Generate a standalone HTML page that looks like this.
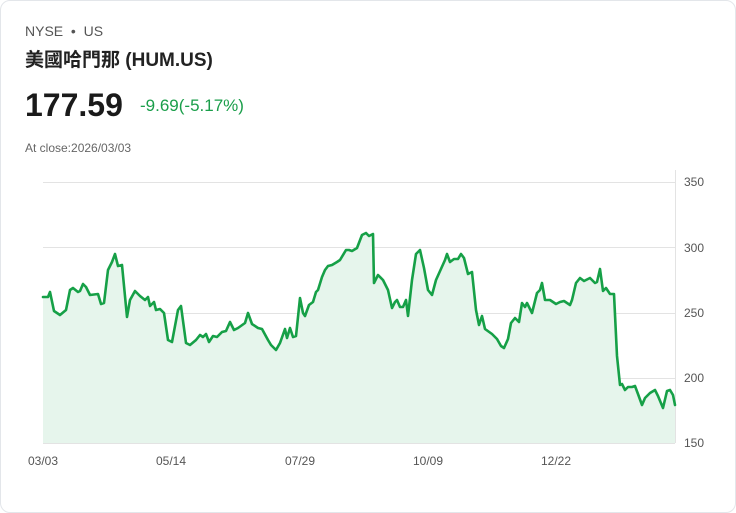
<!DOCTYPE html>
<html><head><meta charset="utf-8"><style>
body{margin:0;background:#fff;font-family:"Liberation Sans","Noto Sans CJK TC",sans-serif;}
.card{position:absolute;left:0;top:0;width:734px;height:511px;border:1px solid #e3e6ea;border-radius:10px;}
.t{position:absolute;white-space:nowrap;}
</style></head><body>
<div class="card"></div>
<div class="t" style="left:25px;top:23px;font-size:14px;color:#555;">NYSE &nbsp;•&nbsp; US</div>
<div class="t" style="left:25px;top:45px;font-size:19px;font-weight:bold;color:#222;">美國哈門那 (HUM.US)</div>
<div class="t" style="left:25px;top:87px;font-size:32px;font-weight:bold;color:#1a1a1a;">177.59</div>
<div class="t" style="left:140px;top:96px;font-size:17px;color:#1a9e4a;">-9.69(-5.17%)</div>
<div class="t" style="left:25px;top:141px;font-size:12px;color:#666;">At close:2026/03/03</div>
<svg style="position:absolute;left:0;top:0" width="736" height="513">
<g stroke="#e3e3e3" stroke-width="1">
<line x1="43" y1="182.5" x2="675" y2="182.5"/><line x1="43" y1="247.5" x2="675" y2="247.5"/><line x1="43" y1="313.5" x2="675" y2="313.5"/><line x1="43" y1="378.5" x2="675" y2="378.5"/><line x1="43" y1="443.5" x2="675" y2="443.5"/><line x1="675.5" y1="170" x2="675.5" y2="443"/>
</g>
<g font-family="Liberation Sans,sans-serif" font-size="12" fill="#555">
<text x="684" y="186">350</text><text x="684" y="252">300</text><text x="684" y="317">250</text><text x="684" y="382">200</text><text x="684" y="447">150</text>
<text x="28" y="465">03/03</text><text x="156" y="465">05/14</text><text x="285" y="465">07/29</text><text x="413" y="465">10/09</text><text x="541" y="465">12/22</text>
</g>
<path fill="#e6f5ec" d="M43,297 L48,297 50,292 54,311 60,315 66,310 70,290 73,288 78,292 80,291 83,284 86,287 90,295 98,294 101,304 104,303 108,270 112,262 115,254 118,266 122,265 127,317 130,300 135,291 140,296 145,300 148,297 150,306 154,302 156,310 160,309 164,313 168,340 172,342 178,310 181,306 186,343 190,345 196,340 200,335 203,337 206,334 209,342 213,336 217,337 222,332 226,331 230,322 234,330 238,328 245,323 248,313 252,324 258,328 262,329 268,340 271,345 276,350 280,343 285,329 287,338 290,328 293,337 296,336 300,298 303,313 305,316 309,305 313,302 316,292 318,290 322,277 325,270 328,266 332,265 337,262 340,260 346,250 349,250 352,251 357,248 362,235 366,233 369,236 371,235 373,234 374,283 378,275 383,280 388,290 392,308 395,302 397,300 400,307 403,307 406,300 408,316 412,280 416,254 420,250 424,268 428,290 432,295 436,280 445,260 447,254 450,262 454,259 458,259 461,254 464,258 468,274 472,272 476,310 479,325 482,316 485,329 492,334 497,339 501,346 504,348 508,339 511,323 515,318 519,322 522,303 525,307 527,303 532,313 537,293 540,290 542,283 545,300 550,300 556,304 560,302 564,301 570,305 572,300 576,283 580,278 584,281 590,278 595,283 597,282 600,269 603,291 606,288 610,294 614,294 617,356 620,385 622,384 625,390 628,387 632,387 635,386 638,394 642,405 645,398 650,393 655,390 658,396 663,408 667,391 670,390 673,395 675,405 L675,443 L43,443 Z"/>
<path fill="none" stroke="#16a047" stroke-width="2.6" stroke-linejoin="round" stroke-linecap="round" d="M43,297 L48,297 50,292 54,311 60,315 66,310 70,290 73,288 78,292 80,291 83,284 86,287 90,295 98,294 101,304 104,303 108,270 112,262 115,254 118,266 122,265 127,317 130,300 135,291 140,296 145,300 148,297 150,306 154,302 156,310 160,309 164,313 168,340 172,342 178,310 181,306 186,343 190,345 196,340 200,335 203,337 206,334 209,342 213,336 217,337 222,332 226,331 230,322 234,330 238,328 245,323 248,313 252,324 258,328 262,329 268,340 271,345 276,350 280,343 285,329 287,338 290,328 293,337 296,336 300,298 303,313 305,316 309,305 313,302 316,292 318,290 322,277 325,270 328,266 332,265 337,262 340,260 346,250 349,250 352,251 357,248 362,235 366,233 369,236 371,235 373,234 374,283 378,275 383,280 388,290 392,308 395,302 397,300 400,307 403,307 406,300 408,316 412,280 416,254 420,250 424,268 428,290 432,295 436,280 445,260 447,254 450,262 454,259 458,259 461,254 464,258 468,274 472,272 476,310 479,325 482,316 485,329 492,334 497,339 501,346 504,348 508,339 511,323 515,318 519,322 522,303 525,307 527,303 532,313 537,293 540,290 542,283 545,300 550,300 556,304 560,302 564,301 570,305 572,300 576,283 580,278 584,281 590,278 595,283 597,282 600,269 603,291 606,288 610,294 614,294 617,356 620,385 622,384 625,390 628,387 632,387 635,386 638,394 642,405 645,398 650,393 655,390 658,396 663,408 667,391 670,390 673,395 675,405"/>
</svg>
</body></html>
